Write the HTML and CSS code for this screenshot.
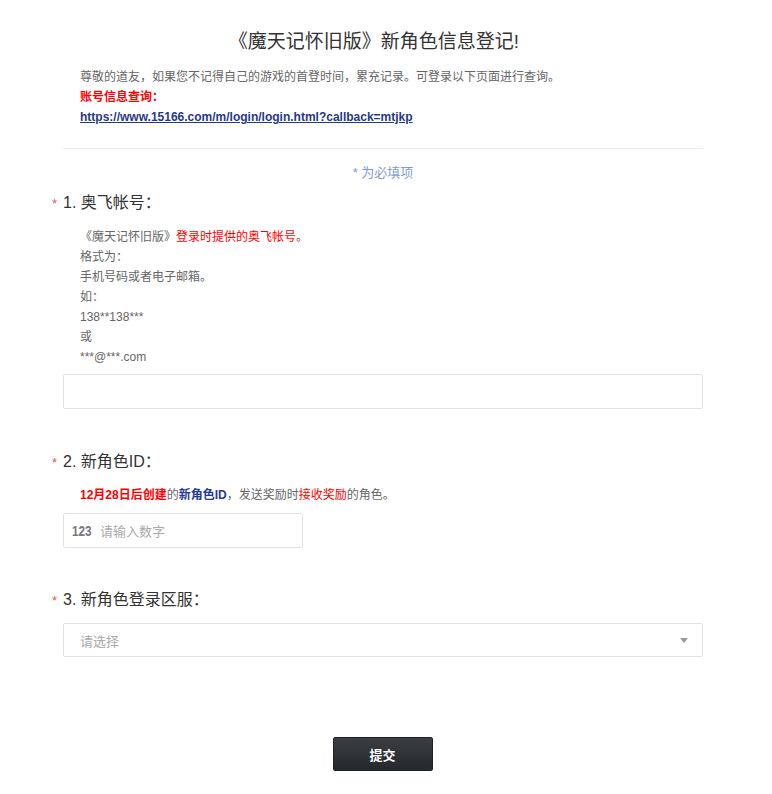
FILE: index.html
```html
<!DOCTYPE html>
<html>
<head>
<meta charset="utf-8">
<link rel="stylesheet" href="styles.css">
</head>
<body>
<div class="page">
  <h1 class="title">《魔天记怀旧版》新角色信息登记!</h1>
  <div class="intro">
    <p>尊敬的道友，如果您不记得自己的游戏的首登时间，累充记录。可登录以下页面进行查询。</p>
    <p class="red bold">账号信息查询：</p>
    <p><a class="link" href="#">https://www.15166.com/m/login/login.html?callback=mtjkp</a></p>
  </div>
  <div class="divider"></div>
  <div class="required-note">* 为必填项</div>

  <div class="question q1">
    <div class="qlabel"><span class="star">*</span>1. 奥飞帐号：</div>
    <div class="desc">
      <p>《魔天记怀旧版》<span class="red">登录时提供的奥飞帐号</span>。</p>
      <p>格式为：</p>
      <p>手机号码或者电子邮箱。</p>
      <p>如：</p>
      <p>138**138***</p>
      <p>或</p>
      <p>***@***.com</p>
    </div>
    <div class="input full"></div>
  </div>

  <div class="question q2">
    <div class="qlabel"><span class="star">*</span>2. 新角色ID：</div>
    <div class="desc">
      <p><span class="red bold">12月28日后创建</span>的<span class="blue bold">新角色ID</span>，发送奖励时<span class="red">接收奖励</span>的角色。</p>
    </div>
    <div class="input num"><span class="numicon">123</span><span class="ph">请输入数字</span></div>
  </div>

  <div class="question q3">
    <div class="qlabel"><span class="star">*</span>3. 新角色登录区服：</div>
    <div class="input full select"><span class="ph">请选择</span><span class="arrow"></span></div>
  </div>

  <div class="actions"><button class="submit">提交</button></div>
</div>
</body>
</html>
```

FILE: styles.css
```css
* { box-sizing: border-box; }
html, body { margin: 0; padding: 0; background: #fff; }
body {
  font-family: "Liberation Sans", Arial, "Noto Sans CJK SC", sans-serif;
  color: #333;
}
p { margin: 0; }
.page {
  width: 640px;
  margin-left: 63px;
  padding-top: 29px;
}
.title {
  margin: 0;
  font-weight: normal;
  font-size: 19px;
  line-height: 26px;
  text-align: center;
  color: #333;
  padding-right: 18px;
}
.intro {
  margin-top: 12px;
  padding-left: 17px;
  font-size: 12px;
  line-height: 20px;
  color: #666;
}
.red { color: #ff0000; }
.blue { color: #1f3a93; }
.bold { font-weight: bold; }
.link {
  color: #1f3a8a;
  font-weight: bold;
  text-decoration: underline;
}
.divider {
  margin-top: 21px;
  height: 1px;
  background: #ebebeb;
}
.required-note {
  margin-top: 15px;
  text-align: center;
  font-size: 13px;
  line-height: 18px;
  color: #7f9bd8;
}
.question { margin-top: 10px; }
.q2 { margin-top: 42px; }
.q3 { margin-top: 41px; }
.qlabel {
  position: relative;
  font-size: 16px;
  line-height: 22px;
  color: #333;
}
.star {
  position: absolute;
  left: -11px;
  top: 1px;
  color: #f25252;
  font-size: 13px;
}
.desc {
  margin-top: 13px;
  padding-left: 17px;
  font-size: 12px;
  line-height: 20px;
  color: #666;
}
.q2 .desc { margin-top: 12px; }
.input {
  border: 1px solid #e2e2e2;
  border-radius: 2px;
  background: #fff;
  height: 35px;
  font-size: 13px;
  display: flex;
  align-items: center;
}
.q1 .input { margin-top: 7px; }
.q2 .input { margin-top: 8px; width: 240px; height: 35px; }
.q3 .input { margin-top: 12px; height: 34px; }
.numicon {
  margin-left: 8px;
  width: 22px;
  font-family: "Liberation Sans Narrow", "Liberation Sans", sans-serif;
  font-weight: bold;
  font-size: 15px;
  color: #777;
  transform: scaleX(0.78);
  transform-origin: left center;
  white-space: nowrap;
}
.num .ph { margin-left: 6px; }
.ph { color: #aaa; font-size: 13px; }
.select { padding-left: 16px; padding-right: 14px; justify-content: space-between; }
.arrow {
  width: 0; height: 0;
  border-left: 4px solid transparent;
  border-right: 4px solid transparent;
  border-top: 5px solid #999;
}
.actions {
  margin-top: 80px;
  display: flex;
  justify-content: center;
  padding-right: 1px;
}
.submit {
  width: 100px;
  height: 34px;
  border: 1px solid #1e2124;
  border-radius: 2px;
  background: linear-gradient(#3a3d42, #25282c);
  color: #fff;
  font-family: "Liberation Sans", "Noto Sans CJK SC", sans-serif;
  font-size: 13px;
  font-weight: bold;
}
```
